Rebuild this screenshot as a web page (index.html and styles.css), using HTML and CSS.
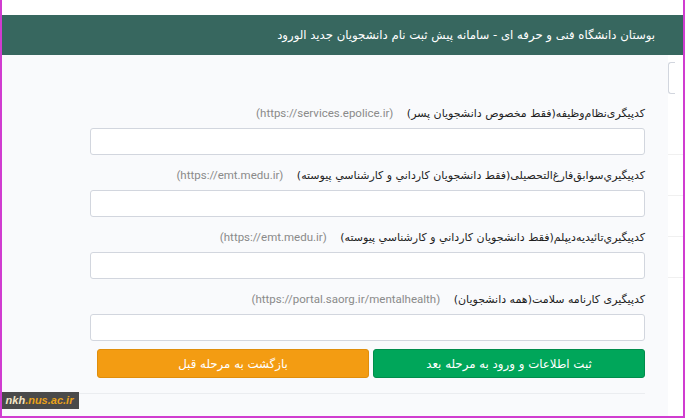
FILE: index.html
```html
<!DOCTYPE html>
<html lang="fa" dir="rtl">
<head>
  <meta charset="UTF-8">
  <meta name="viewport" content="width=device-width, initial-scale=1.0">
  <title>سامانه پیش ثبت نام</title>
  <link rel="stylesheet" href="styles.css">
</head>
<body>
  <div class="top-strip"></div>
  <header class="page-header">بوستان دانشگاه فنی و حرفه ای - سامانه پیش ثبت نام دانشجویان جدید الورود</header>

  <div class="main">
    <aside class="side">
      <div class="side-box"></div>
      <div class="side-row"></div>
      <div class="side-row"></div>
      <div class="side-row"></div>
      <div class="side-row"></div>
    </aside>

    <div class="content">
      <form class="reg-form">
        <div class="field">
          <label>کدپیگری‌نظام‌وظیفه(فقط مخصوص دانشجویان پسر) <bdi class="url" dir="ltr">(https://services.epolice.ir)</bdi></label>
          <input type="text">
        </div>
        <div class="field">
          <label>کدپیگيري‌سوابق‌فارغ‌التحصیلی(فقط دانشجويان كارداني و كارشناسي پيوسته) <bdi class="url" dir="ltr">(https://emt.medu.ir)</bdi></label>
          <input type="text">
        </div>
        <div class="field">
          <label>کدپیگيري‌تائيديه‌ديپلم(فقط دانشجويان كارداني و كارشناسي پيوسته) <bdi class="url" dir="ltr">(https://emt.medu.ir)</bdi></label>
          <input type="text">
        </div>
        <div class="field">
          <label>کدپیگیری کارنامه سلامت(همه دانشجویان) <bdi class="url" dir="ltr">(https://portal.saorg.ir/mentalhealth)</bdi></label>
          <input type="text">
        </div>
        <div class="actions">
          <button type="button" class="btn btn-green">ثبت اطلاعات و ورود به مرحله بعد</button>
          <button type="button" class="btn btn-orange">بازگشت به مرحله قبل</button>
        </div>
      </form>
      <div class="footer-line"></div>
    </div>
  </div>

  <div class="watermark" dir="ltr"><span class="wm-host">nkh</span><span class="wm-domain">.nus.ac.ir</span></div>
</body>
</html>
```

FILE: styles.css
```css
html, body {
  margin: 0;
  height: 100%;
}

body {
  font-family: "DejaVu Sans", sans-serif;
  background-color: #ffffff;
  color: #333;
  box-sizing: border-box;
  height: 418px;
  border-left: 2px solid #d03cd0;
  border-right: 2px solid #d03cd0;
  border-bottom: 2px solid #d03cd0;
  display: flex;
  flex-direction: column;
  position: relative;
  overflow: hidden;
}

.top-strip {
  height: 15px;
  background-color: #fff;
}

.page-header {
  height: 40px;
  background-color: #37675f;
  color: #fff;
  font-size: 11.7px;
  line-height: 40px;
  padding-right: 28px;
  white-space: nowrap;
}

.main {
  flex: 1;
  display: flex;
  flex-direction: row;
}

.content {
  flex: 1;
  background-color: #f9fafc;
  display: flex;
  flex-direction: column;
}

.reg-form {
  padding: 48px 23px 0 88px;
}

.field {
  margin-bottom: 10px;
}

.field label {
  display: block;
  height: 20px;
  line-height: 20px;
  margin-bottom: 5px;
  font-size: 11px;
  color: #1e1e1e;
  white-space: nowrap;
}

.url {
  font-family: Roboto, sans-serif;
  font-size: 11.5px;
  color: #8a8a8a;
  margin-right: 10px;
}

.field input {
  display: block;
  width: 100%;
  height: 27px;
  box-sizing: border-box;
  border: 1px solid #d2d6de;
  border-radius: 3px;
  background-color: #fff;
}

.actions {
  display: flex;
  gap: 4px;
  padding-left: 7px;
  margin-top: -2px;
}

.btn {
  flex: 1;
  height: 29px;
  border-radius: 3px;
  font-family: "DejaVu Sans", sans-serif;
  font-size: 11.8px;
  color: #fff;
  cursor: pointer;
}

.btn-green {
  background-color: #00a65a;
  border: 1px solid #008d4c;
}

.btn-orange {
  background-color: #f39c12;
  border: 1px solid #e08e0b;
}

.footer-line {
  margin-top: 15px;
  margin-right: 23px;
  border-top: 1px solid #ebedf0;
}

.side {
  width: 15px;
  background-color: #fff;
  padding-top: 7px;
}

.side-box {
  height: 30px;
  margin-right: 8px;
  border: 1px solid #d2d6de;
  border-right: none;
  border-radius: 3px 0 0 3px;
  margin-bottom: 20px;
}

.side-row {
  height: 40px;
  border-bottom: 1px solid #f0f0f0;
}

.watermark {
  position: absolute;
  left: -2px;
  bottom: 7px;
  width: 79px;
  height: 17px;
  background-color: #4a4a4a;
  font-family: "Liberation Sans", sans-serif;
  font-style: italic;
  font-weight: bold;
  font-size: 11px;
  line-height: 17px;
  text-align: center;
}

.wm-host {
  color: #f4e6c6;
}

.wm-domain {
  color: #e9a21a;
}
```
